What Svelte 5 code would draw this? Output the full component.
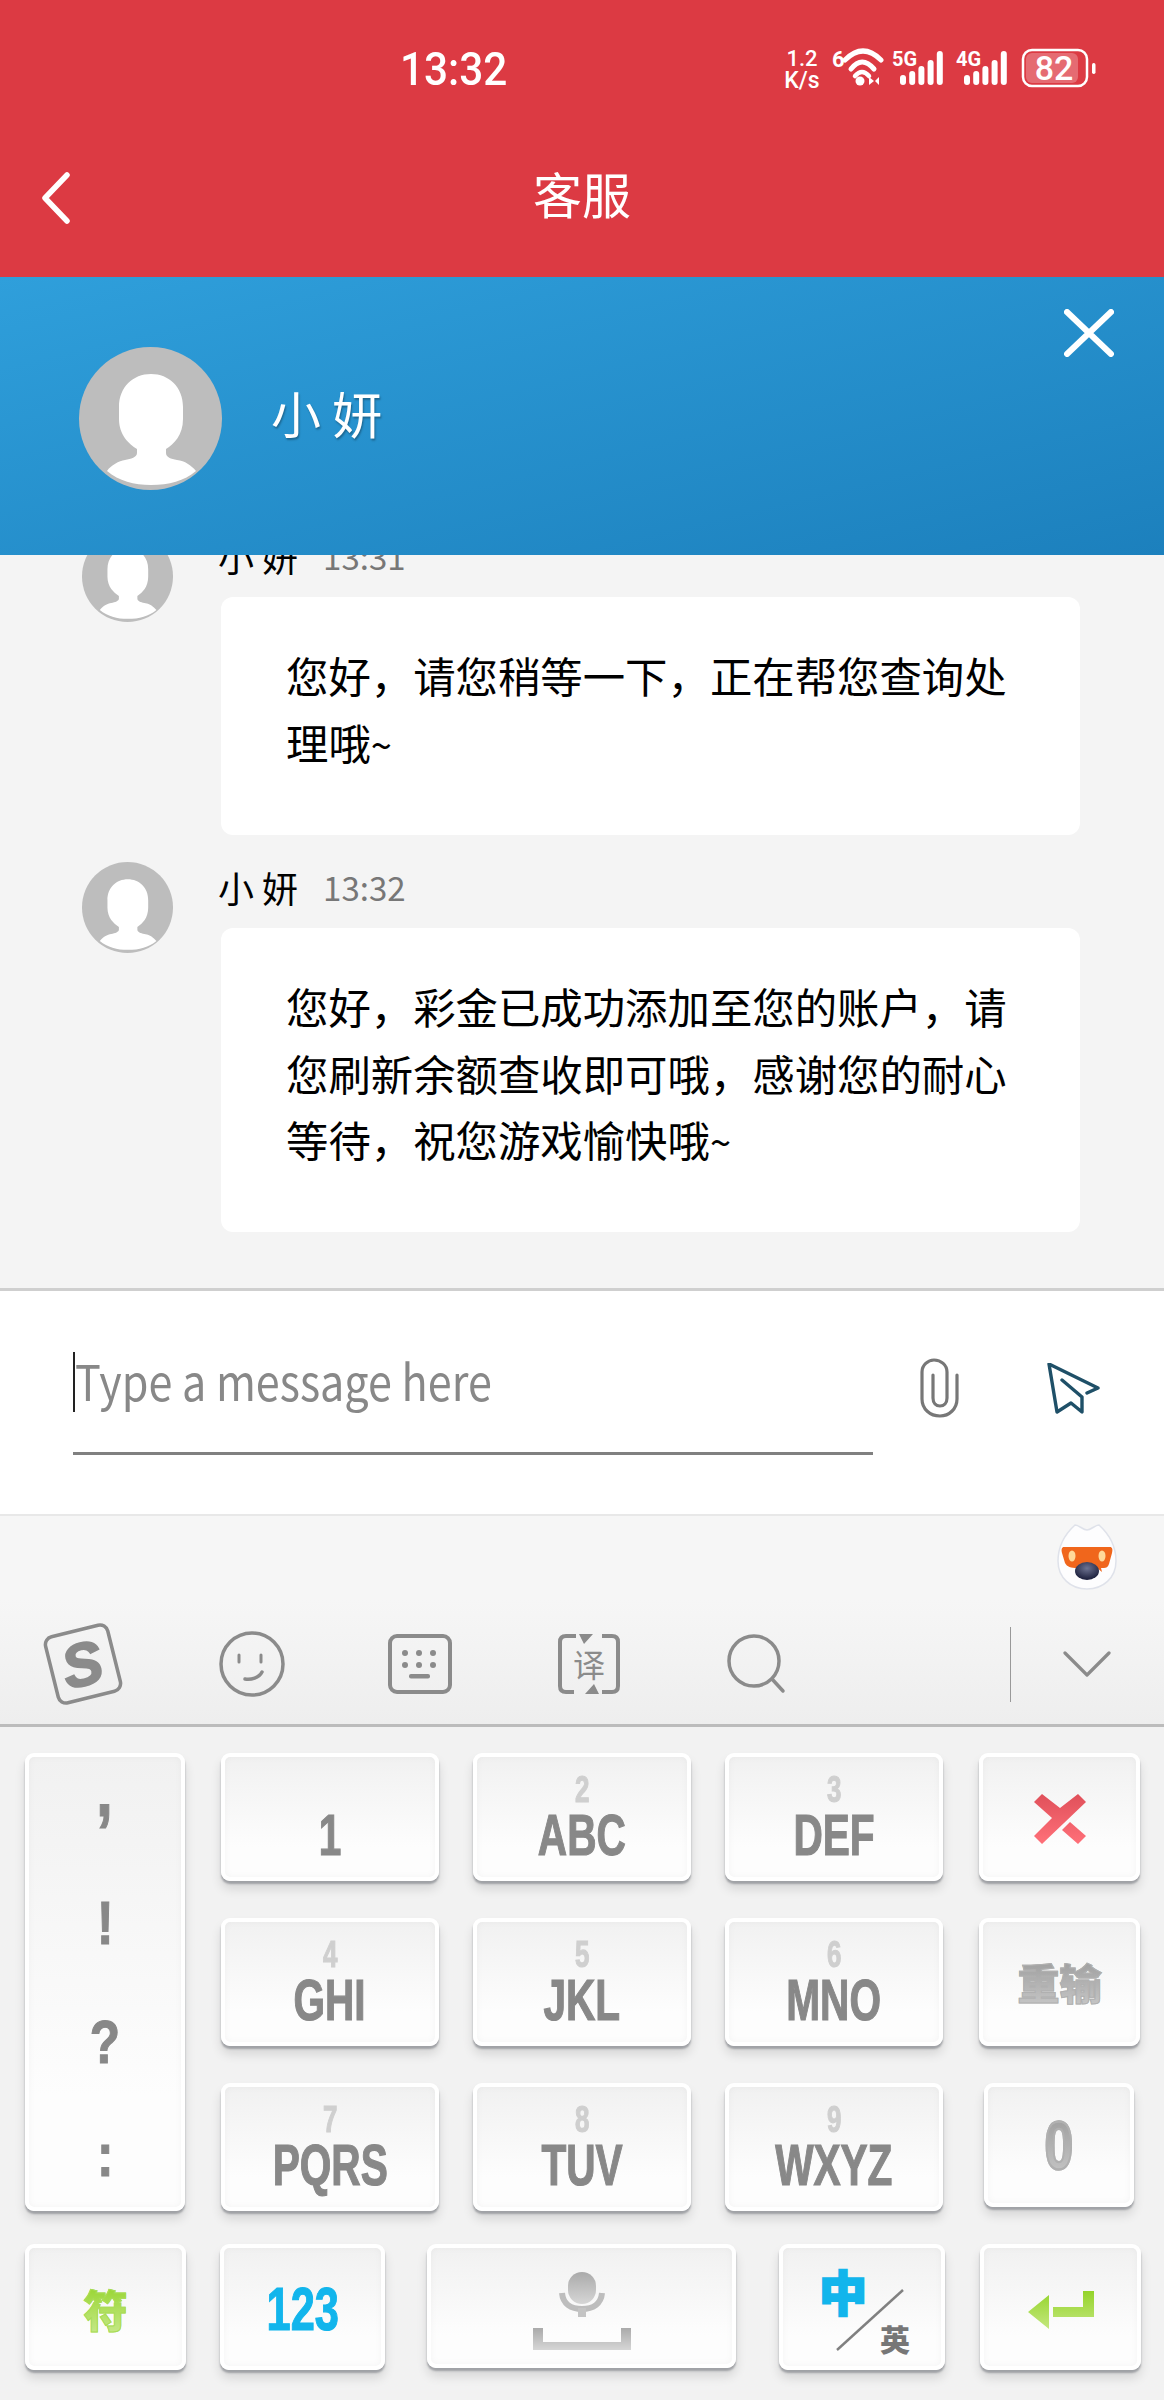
<script>
  const messages = [
    { time: '13:31', lines: ['您好，请您稍等一下，正在帮您查询处', '理哦'], tildeOn: 1 },
    { time: '13:32', lines: ['您好，彩金已成功添加至您的账户，请', '您刷新余额查收即可哦，感谢您的耐心', '等待，祝您游戏愉快哦'], tildeOn: 2 }
  ];
  const rows = [
    [{ d: '', t: '1' }, { d: '2', t: 'ABC' }, { d: '3', t: 'DEF' }],
    [{ d: '4', t: 'GHI' }, { d: '5', t: 'JKL' }, { d: '6', t: 'MNO' }],
    [{ d: '7', t: 'PQRS' }, { d: '8', t: 'TUV' }, { d: '9', t: 'WXYZ' }]
  ];
  // signal bars, x offset and top edge
  const bars = [[0, 75], [9.2, 71], [18.4, 66], [27.6, 60], [36.8, 51]];
</script>

{#snippet avatar(size)}
  <svg class="avatar" width={size} height={size} viewBox="0 0 143 143">
    <circle cx="71.5" cy="71.5" r="71.5" fill="#bdbdbd" />
    <path fill="#fff" d="M72 27C90 27 104 40 104 60L104 72C104 88 95 97 87 102L87 106C87 110 92 112 98 113C106 114 112 118 117 124C105 134 90 138 72 138C55 138 40 134 28 124C32 118 40 114 46 113C52 112 58 110 58 106L58 102C50 97 40 88 40 72L40 60C40 40 54 27 72 27Z" />
  </svg>
{/snippet}

<div class="page">
  <header class="red">
    <div class="status">
      <span class="clock">13:32</span>
      <svg class="sysicons" width="312" height="42" viewBox="785 48 312 42">
        <g fill="#fff" font-family="Roboto, sans-serif" font-weight="500">
          <text x="802" y="66" font-size="22" text-anchor="middle">1.2</text>
          <text x="802" y="88" font-size="23" text-anchor="middle">K/s</text>
          <text x="832" y="67" font-size="22" font-weight="700">6</text>
          <circle cx="860" cy="81" r="4.5" />
          <path d="M869 77l5 4-5 4zM879 85l-4-4 4-4z" />
          <text x="892" y="66" font-size="20" font-weight="700">5G</text>
          <text x="956" y="66" font-size="20" font-weight="700">4G</text>
          {#each bars as b}
            <rect x={900 + b[0]} y={b[1]} width="6" height={85 - b[1]} rx="3" />
            <rect x={964 + b[0]} y={b[1]} width="6" height={85 - b[1]} rx="3" />
          {/each}
          <rect x="1026" y="53" width="52" height="30" rx="6" fill="#fff" fill-opacity=".25" />
          <text x="1054" y="80" font-size="34" text-anchor="middle">82</text>
          <rect x="1092" y="63" width="3.5" height="11" rx="1.7" />
        </g>
        <g fill="none" stroke="#fff" stroke-linecap="round">
          <path stroke-width="5" d="M845 60Q863 42 881 60" />
          <path stroke-width="5" d="M851 69Q862 55 874 69" />
          <path stroke-width="4.5" d="M855 76Q862 68 869 76" />
          <rect x="1023" y="50" width="64" height="36" rx="9" stroke-width="2.5" />
        </g>
      </svg>
    </div>
    <div class="titlebar">
      <svg class="back" width="30" height="52" viewBox="0 0 30 52" fill="none" stroke="#fff" stroke-width="5.5" stroke-linecap="round" stroke-linejoin="round">
        <path d="M26 3L4 26L26 49" />
      </svg>
      <span class="title">客服</span>
    </div>
  </header>

  <section class="blue">
    <div class="closerow">
      <svg width="50" height="48" viewBox="0 0 50 48" fill="none" stroke="#fff" stroke-width="6" stroke-linecap="round">
        <path d="M3 3L47 45M47 3L3 45" />
      </svg>
    </div>
    <div class="agent">
      {@render avatar(143)}
      <span class="agentname">小 妍</span>
    </div>
  </section>

  <main class="chat">
    {#each messages as m}
      <div class="msg">
        {@render avatar(91)}
        <div class="body">
          <div class="meta"><span class="who">小 妍</span><span class="time">{m.time}</span></div>
          <div class="bubble">
            {#each m.lines as l, i}<div>{l}{#if i === m.tildeOn}<span class="tilde">~</span>{/if}</div>{/each}
          </div>
        </div>
      </div>
    {/each}
  </main>

  <div class="composer">
    <div class="field"><div class="caret"><span class="placeholder">Type a message here</span></div></div>
    <svg class="clip" width="39" height="60" viewBox="0 0 39 60" fill="none" stroke="#777" stroke-width="3.2" stroke-linecap="round">
      <path d="M37 17V41C37 51 29 58 20 58C10 58 2 51 2 41V14C2 7 8 2 14 2C21 2 27 7 27 14V40C27 45 24 48 20 48C16 48 13 45 13 40V17" />
    </svg>
    <svg class="send" width="54" height="52" viewBox="0 0 54 52" fill="none" stroke="#1f5068" stroke-width="3.4" stroke-linejoin="round" stroke-linecap="round">
      <path d="M40 30L51 25L2 1L10 49L24 40L35 49V34L15 17" />
    </svg>
  </div>

  <div class="kbtop">
    <div class="mascotrow">
      <svg width="60" height="67" viewBox="0 0 60 67">
        <defs>
          <radialGradient id="nose" cx=".5" cy=".35" r=".6"><stop offset="0" stop-color="#6d7391" /><stop offset="1" stop-color="#1f2340" /></radialGradient>
        </defs>
        <path fill="#fdfdfe" stroke="#dfe2ea" stroke-width="1.5" d="M18 2C22 2 26 7 30 7C34 7 38 2 42 2C53 12 59 24 59 38C59 55 46 66 30 66C14 66 1 55 1 38C1 24 7 12 18 2Z" />
        <path fill="#f0661c" d="M7 24H53C55 24 56 26 55 30L52 41C51 44 49 45 47 45H44L45 49L40 45H20C14 45 10 44 8 40L5 30C4 26 5 24 7 24Z" />
        <ellipse cx="15" cy="33" rx="3.5" ry="5.5" fill="#ffd89a" />
        <ellipse cx="45" cy="33" rx="3.5" ry="5.5" fill="#ffd89a" />
        <ellipse cx="30" cy="48" rx="12" ry="9" fill="url(#nose)" />
      </svg>
    </div>
    <div class="toolbar">
      <div class="tool s">
        <svg width="84" height="82" viewBox="0 0 84 82">
          <g transform="rotate(-14 42 41)">
            <rect x="10" y="7" width="64" height="68" rx="8" fill="none" stroke="#8b8b8b" stroke-width="3.5" />
            <text x="41" y="62" text-anchor="middle" fill="#8b8b8b" stroke="#8b8b8b" stroke-width="2" font-family="'Liberation Sans', sans-serif" font-weight="700" font-style="italic" font-size="60">S</text>
          </g>
        </svg>
      </div>
      <div class="tool">
        <svg width="66" height="66" viewBox="0 0 66 66" fill="none" stroke="#8b8b8b" stroke-linecap="round">
          <circle cx="33" cy="33" r="31" stroke-width="3.5" />
          <path stroke-width="3" d="M20 24V31M42 24V31" />
          <path stroke-width="3.5" d="M26 48C32 49 40 47 43 41" />
        </svg>
      </div>
      <div class="tool">
        <svg width="64" height="60" viewBox="0 0 64 60" fill="none" stroke="#8b8b8b">
          <rect x="2" y="2" width="60" height="56" rx="7" stroke-width="4" />
          <g fill="#8b8b8b" stroke="none">
            <circle cx="17" cy="19" r="3" /><circle cx="31" cy="19" r="3" /><circle cx="45" cy="19" r="3" />
            <circle cx="17" cy="31" r="3" /><circle cx="31" cy="31" r="3" /><circle cx="45" cy="31" r="3" />
            <rect x="21" y="40" width="21" height="4.5" rx="2" />
          </g>
        </svg>
      </div>
      <div class="tool">
        <svg width="62" height="62" viewBox="0 0 62 62" fill="none" stroke="#8b8b8b" stroke-width="4">
          <path d="M18 3H8C4 3 2 5 2 9V53C2 57 4 59 8 59H16" />
          <path d="M44 3H54C58 3 60 5 60 9V53C60 57 58 59 54 59H44" />
          <path fill="#8b8b8b" stroke="none" d="M21 1H35L26 11ZM41 61H27L36 51Z" />
          <text x="31" y="44" text-anchor="middle" fill="#8b8b8b" stroke="none" font-family="'Noto Sans CJK SC'" font-size="32">译</text>
        </svg>
      </div>
      <div class="tool">
        <svg width="62" height="60" viewBox="0 0 62 60" fill="none" stroke="#8b8b8b" stroke-linecap="round">
          <circle cx="28" cy="27" r="25" stroke-width="3.5" />
          <path stroke-width="3.5" d="M46 45L57 57" />
        </svg>
      </div>
      <div class="divider"></div>
      <svg class="chev" width="48" height="26" viewBox="0 0 48 26" fill="none" stroke="#8b8b8b" stroke-width="3.2" stroke-linecap="round" stroke-linejoin="round">
        <path d="M2 2L24 24L46 2" />
      </svg>
    </div>
  </div>

  <div class="keys">
    <div class="grid">
      <div class="key punct">
        <span class="narrow comma">,</span><span class="narrow bang">!</span><span class="narrow quest">?</span><span class="narrow">:</span>
      </div>
      {#each rows as row, ri}
        {#each row as k}
          <div class="key letter">
            <div class="dig"><span class="narrow">{k.d}</span></div>
            <div class="lab"><span class="narrow">{k.t}</span></div>
          </div>
        {/each}
        {#if ri === 0}
          <div class="key center last nudge">
            <svg width="52" height="50" viewBox="0 0 52 50">
              <defs><linearGradient id="red" x1="0" y1="0" x2="0" y2="1"><stop offset="0" stop-color="#e0505a" /><stop offset="1" stop-color="#ff7079" /></linearGradient></defs>
              <path fill="url(#red)" d="M8 0L26 14L44 0L52 8L8 50L0 42L18 24L0 8ZM36 28L52 42L44 50L28 36Z" />
            </svg>
          </div>
        {:else if ri === 1}
          <div class="key center last"><span class="grad cjkbold">重输</span></div>
        {:else}
          <div class="key center zero"><span class="grad narrow zeroch">0</span></div>
        {/if}
      {/each}
    </div>
    <div class="bottom">
      <div class="key center b1"><span class="greentext cjkbold">符</span></div>
      <div class="key center b2"><span class="num narrow">123</span></div>
      <div class="key center b3">
        <svg width="98" height="78" viewBox="0 0 98 78">
          <defs><linearGradient id="mic" x1="0" y1="0" x2="0" y2="1"><stop offset="0" stop-color="#aaa" /><stop offset="1" stop-color="#d6d6d6" /></linearGradient></defs>
          <rect x="35" y="0" width="28" height="32" rx="14" fill="url(#mic)" />
          <path fill="none" stroke="#bdbdbd" stroke-width="6" d="M29 21C30 32 38 37 49 37C60 37 68 32 69 21" />
          <rect x="45" y="36" width="8" height="9" fill="#c4c4c4" />
          <path fill="url(#mic)" d="M0 56H10V70H88V56H98V78H0Z" />
        </svg>
      </div>
      <div class="key b4">
        <span class="zh">中</span>
        <svg class="slash" width="68" height="62" viewBox="0 0 68 62"><path d="M1 61L67 1" stroke="#808080" stroke-width="2.4" /></svg>
        <span class="en">英</span>
      </div>
      <div class="key center b5">
        <svg width="66" height="38" viewBox="0 0 66 38">
          <defs><linearGradient id="grn" x1="0" y1="0" x2="0" y2="1"><stop offset="0" stop-color="#94d42a" /><stop offset="1" stop-color="#c4e77f" /></linearGradient></defs>
          <path fill="url(#grn)" d="M21 4V38L0 21ZM55 0H66V26H25V16H55Z" />
        </svg>
      </div>
    </div>
  </div>
</div>

<style>
  :global(body) {
    margin: 0;
    background: #f2f2f2;
  }
  .page {
    width: 1164px;
    height: 2400px;
    display: flex;
    flex-direction: column;
    overflow: hidden;
    font-family: "Noto Sans CJK SC", sans-serif;
  }
  .red {
    height: 277px;
    background: #dc3a43;
    color: #fff;
    flex: none;
  }
  .status {
    height: 130px;
    display: flex;
    align-items: flex-start;
    padding-top: 48px;
    box-sizing: border-box;
    padding-left: 400px;
  }
  .clock {
    font-family: Roboto, sans-serif;
    font-weight: 500;
    font-size: 47px;
    line-height: 42px;
    transform: scaleX(.9);
    transform-origin: left;
  }
  .sysicons {
    margin-left: auto;
    margin-right: 67px;
  }
  .titlebar {
    height: 134px;
    position: relative;
    display: flex;
    justify-content: center;
    align-items: center;
    padding-bottom: 2px;
    box-sizing: border-box;
  }
  .back {
    position: absolute;
    left: 41px;
    top: 42px;
  }
  .title {
    font-size: 49px;
    line-height: 60px;
    margin-top: -6px;
  }
  .blue {
    height: 278px;
    flex: none;
    background: linear-gradient(to bottom right, #2f9fdb 0%, #1c80bd 100%);
    position: relative;
    z-index: 1;
  }
  .closerow {
    display: flex;
    justify-content: flex-end;
    padding: 32px 50px 0 0;
    height: 38px;
  }
  .agent {
    display: flex;
    align-items: center;
    padding-left: 79px;
  }
  .avatar {
    flex: none;
  }
  .agentname {
    color: #fff;
    font-size: 50px;
    line-height: 60px;
    margin: 0 0 14px 49px;
    text-shadow: 1px 2px 2px rgba(0, 0, 0, .3);
  }
  .chat {
    height: 736px;
    flex: none;
    box-sizing: border-box;
    background: #f4f4f4;
    border-bottom: 3px solid #cfcfcf;
    display: flex;
    flex-direction: column;
    justify-content: flex-end;
    gap: 27px;
    padding-bottom: 56px;
    overflow: hidden;
  }
  .msg {
    display: flex;
    padding-left: 82px;
    flex: none;
  }
  .body {
    margin-left: 48px;
    width: 859px;
  }
  .meta {
    height: 50px;
    padding-bottom: 16px;
    display: flex;
    align-items: center;
    color: #000;
  }
  .who {
    font-size: 36px;
    line-height: 44px;
    margin-left: -3px;
  }
  .time {
    font-size: 33px;
    line-height: 44px;
    color: #777;
    margin-left: 25px;
  }
  .bubble {
    background: #fff;
    border-radius: 12px;
    padding: 45px 20px 59px 65px;
    font-size: 42.4px;
    line-height: 66.7px;
    color: #000;
  }
  .tilde {
    font-size: 38px;
    line-height: 0;
  }
  .composer {
    height: 223px;
    flex: none;
    background: #fff;
    display: flex;
    align-items: flex-start;
    box-sizing: border-box;
    padding-left: 73px;
  }
  .field {
    width: 800px;
    height: 164px;
    box-sizing: border-box;
    border-bottom: 3px solid #808080;
    padding-top: 61px;
    flex: none;
  }
  .caret {
    height: 60px;
    border-left: 2px solid #222;
  }
  .placeholder {
    display: inline-block;
    font-size: 49px;
    line-height: 56px;
    color: #888;
    white-space: nowrap;
    transform: scaleX(.88);
    transform-origin: left;
  }
  .clip {
    margin: 67px 0 0 47px;
    flex: none;
  }
  .send {
    margin: 72px 0 0 88px;
    flex: none;
  }
  .kbtop {
    height: 213px;
    flex: none;
    box-sizing: border-box;
    border-top: 2px solid #e8e8e8;
    border-bottom: 3px solid #bcbcbc;
    background: linear-gradient(#f6f6f6, #f6f6f6 40%, #eeeeee);
  }
  .mascotrow {
    display: flex;
    justify-content: flex-end;
    padding: 7px 47px 0 0;
    height: 94px;
    box-sizing: border-box;
  }
  .toolbar {
    display: flex;
    align-items: center;
    height: 108px;
  }
  .tool {
    width: 168.5px;
    display: flex;
    justify-content: center;
    flex: none;
  }
  .tool.s {
    margin-left: -1px;
  }
  .divider {
    width: 1.5px;
    height: 75px;
    background: #999;
    margin-left: 168px;
    flex: none;
  }
  .chev {
    margin-left: 52px;
  }
  .keys {
    flex: 1;
    background: #f2f2f2;
    padding: 26px 0 0 25px;
  }
  .grid {
    display: grid;
    grid-template-columns: 162px 218px 218px 218px 165px;
    grid-auto-rows: 128px;
    column-gap: 34px;
    row-gap: 37px;
  }
  .key {
    box-sizing: border-box;
    border: 4px solid #fff;
    border-radius: 9px;
    background: linear-gradient(#f1f1f1, #fdfdfd 75%);
    box-shadow: 0 3px 2px #a0a2a6, 0 8px 11px rgba(0, 0, 0, .12), inset 0 0 7px rgba(0, 0, 0, .04);
  }
  .center {
    display: flex;
    align-items: center;
    justify-content: center;
  }
  .last {
    width: 161px;
    margin-left: 2px;
  }
  .nudge {
    padding-top: 4px;
  }
  .punct {
    grid-row: span 3;
    width: 160px;
    display: flex;
    flex-direction: column;
    align-items: center;
    color: #888;
    font-size: 62px;
    line-height: 119px;
  }
  .punct .narrow {
    height: 119px;
    transform: scaleX(.8);
  }
  .punct .comma {
    font-size: 76px;
    margin: -27px 0 14px;
  }
  .punct .bang {
    height: 122px;
  }
  .punct .quest {
    height: 113px;
  }
  .letter {
    text-align: center;
    color: #888;
    padding-top: 9px;
  }
  .narrow {
    display: inline-block;
    font-family: "Liberation Sans", sans-serif;
    font-weight: 700;
    transform: scaleX(.7);
    -webkit-text-stroke: 1.2px currentColor;
  }
  .dig {
    height: 40px;
    font-size: 37px;
    line-height: 40px;
    color: #cfcfcf;
  }
  .lab {
    font-size: 58px;
    line-height: 56px;
    margin-top: -4px;
    white-space: nowrap;
  }
  .grad {
    background: linear-gradient(#9a9a9a, #c8c8c8);
    -webkit-background-clip: text;
    background-clip: text;
    color: transparent;
    -webkit-text-stroke: 1px #b0b0b0;
  }
  .grad.narrow {
    -webkit-text-stroke: 2.4px #b0b0b0;
  }
  .cjkbold {
    font-weight: 900;
    font-size: 42px;
    line-height: 54px;
  }
  .zero {
    width: 150px;
    height: 124px;
    margin: 0 0 4px 7px;
  }
  .zeroch {
    font-size: 68px;
    line-height: 70px;
    transform: scaleX(.76);
  }
  .bottom {
    display: flex;
    margin-top: 33px;
    height: 126px;
  }
  .b1 { width: 161px; flex: none; padding-top: 3px; }
  .b2 { width: 165px; margin-left: 34px; flex: none; padding-top: 4px; }
  .b3 { width: 309px; margin-left: 42px; height: 124px; flex: none; padding-top: 10px; }
  .b4 { width: 166px; margin-left: 43px; flex: none; position: relative; }
  .b5 { width: 161px; margin-left: 35px; flex: none; padding-top: 6px; }
  .greentext {
    background: linear-gradient(#94d42a, #c8e98c);
    -webkit-background-clip: text;
    background-clip: text;
    color: transparent;
    -webkit-text-stroke: 1px #a9dc55;
    font-size: 44px;
  }
  .num {
    color: #12b5ec;
    font-size: 62px;
    line-height: 70px;
  }
  .zh {
    position: absolute;
    left: 36px;
    top: 12px;
    font-size: 48px;
    line-height: 60px;
    font-weight: 900;
    color: #12b5ec;
    -webkit-text-stroke: 2px #12b5ec;
  }
  .slash {
    position: absolute;
    left: 53px;
    top: 41px;
  }
  .en {
    position: absolute;
    left: 97px;
    top: 70px;
    font-size: 30px;
    line-height: 40px;
    font-weight: 900;
    color: #777;
  }
</style>
